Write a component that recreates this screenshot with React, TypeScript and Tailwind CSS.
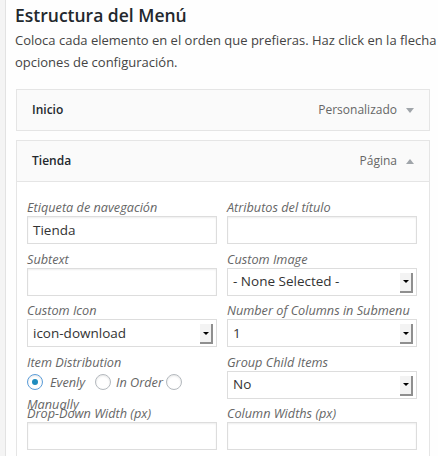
import React from "react";

const Arrow = () => (
  <div className="absolute right-[3px] top-[4px] flex h-[20px] w-[13px] items-center justify-center border-b-2 border-r-2 border-[#8f8f8f] bg-[#f3f3f3]">
    <div className="h-0 w-0 border-l-[3px] border-r-[3px] border-t-[3px] border-l-transparent border-r-transparent border-t-black" />
  </div>
);

const Label = ({ children }: { children: React.ReactNode }) => (
  <div className="h-[18px] whitespace-nowrap text-[12.7px] italic leading-[18px] text-[#666]">{children}</div>
);

const Input = ({ value }: { value?: string }) => (
  <div className="flex h-[28px] w-[190px] items-center border border-[#ddd] bg-white px-[5px] text-[13.5px] text-[#333] shadow-[inset_0_1px_2px_rgba(0,0,0,0.07)]">
    {value}
  </div>
);

const Select = ({ value }: { value: string }) => (
  <div className="relative flex h-[28px] w-[190px] items-center border border-[#ddd] bg-white px-[5px] text-[13.5px] text-[#333]">
    {value}
    <Arrow />
  </div>
);

const Field = ({ label, children }: { label: string; children: React.ReactNode }) => (
  <div className="h-[51.5px]">
    <Label>{label}</Label>
    {children}
  </div>
);

const Radio = ({ checked }: { checked?: boolean }) => (
  <span
    className={`inline-flex h-[16px] w-[16px] shrink-0 items-center justify-center rounded-full border bg-white align-middle shadow-[inset_0_1px_2px_rgba(0,0,0,0.1)] ${
      checked ? "border-[#5b9dd9] shadow-[0_0_2px_rgba(30,140,190,0.8)]" : "border-[#b4b9be]"
    }`}
  >
    {checked && <span className="h-[6px] w-[6px] rounded-full bg-[#1e8cbe]" />}
  </span>
);

const TriDown = () => (
  <div className="h-0 w-0 border-l-[4px] border-r-[4px] border-t-[5px] border-l-transparent border-r-transparent border-t-[#a0a5aa]" />
);
const TriUp = () => (
  <div className="h-0 w-0 border-b-[5px] border-l-[4px] border-r-[4px] border-b-[#a0a5aa] border-l-transparent border-r-transparent" />
);

export default function App() {
  return (
    <div className="h-[456px] w-[438px] overflow-hidden bg-[#f4f4f4] font-['Open_Sans',sans-serif]">
      <div className="ml-[5px] h-full border-l border-[#e2e2e2] bg-[#fefefe] pl-[9px] pt-[4px]">
        <h3 className="text-[17.5px] font-semibold leading-[22px] text-[#23282d]">Estructura del Menú</h3>
        <p className="mt-[3px] whitespace-nowrap text-[13px] leading-[22px] text-[#444]">
          Coloca cada elemento en el orden que prefieras. Haz click en la flecha a la derecha del elemento para mostrar más
          <br />
          opciones de configuración.
        </p>
        <div className="ml-[1px] mt-[16px] w-[414px]">
          <div className="flex h-[42px] items-center border border-[#e5e5e5] bg-[#fafafa] pl-[15px] pr-[15px]">
            <span className="text-[12px] font-semibold text-[#23282d]">Inicio</span>
            <span className="ml-auto text-[12px] text-[#666]">Personalizado</span>
            <span className="ml-[9px]">
              <TriDown />
            </span>
          </div>
          <div className="mt-[9px] flex h-[42px] items-center border border-[#e5e5e5] bg-[#fafafa] pl-[15px] pr-[15px]">
            <span className="text-[12px] font-semibold text-[#23282d]">Tienda</span>
            <span className="ml-auto text-[12px] text-[#666]">Página</span>
            <span className="ml-[9px]">
              <TriUp />
            </span>
          </div>
          <div className="h-[300px] border-x border-[#e5e5e5] bg-white pl-[10px] pt-[16px]">
            <div className="grid grid-cols-[190px_190px] gap-x-[10px]">
              <Field label="Etiqueta de navegación">
                <Input value="Tienda" />
              </Field>
              <Field label="Atributos del título">
                <Input />
              </Field>
              <Field label="Subtext">
                <Input />
              </Field>
              <Field label="Custom Image">
                <Select value="- None Selected -" />
              </Field>
              <Field label="Custom Icon">
                <Select value="icon-download" />
              </Field>
              <Field label="Number of Columns in Submenu">
                <Select value="1" />
              </Field>
              <div className="h-[51.5px]">
                <Label>Item Distribution</Label>
                <div className="h-[33.5px] text-[12.7px] italic leading-[22px] text-[#666]">
                  <div className="flex items-center whitespace-nowrap">
                    <Radio checked />
                    <span className="ml-[7px]">Evenly</span>
                    <span className="ml-[10px] inline-flex">
                      <Radio />
                    </span>
                    <span className="ml-[5px]">In Order</span>
                    <span className="ml-[3px] inline-flex">
                      <Radio />
                    </span>
                  </div>
                  <div>Manually</div>
                </div>
              </div>
              <Field label="Group Child Items">
                <Select value="No" />
              </Field>
              <Field label="Drop-Down Width (px)">
                <Input />
              </Field>
              <Field label="Column Widths (px)">
                <Input />
              </Field>
            </div>
          </div>
        </div>
      </div>
    </div>
  );
}
